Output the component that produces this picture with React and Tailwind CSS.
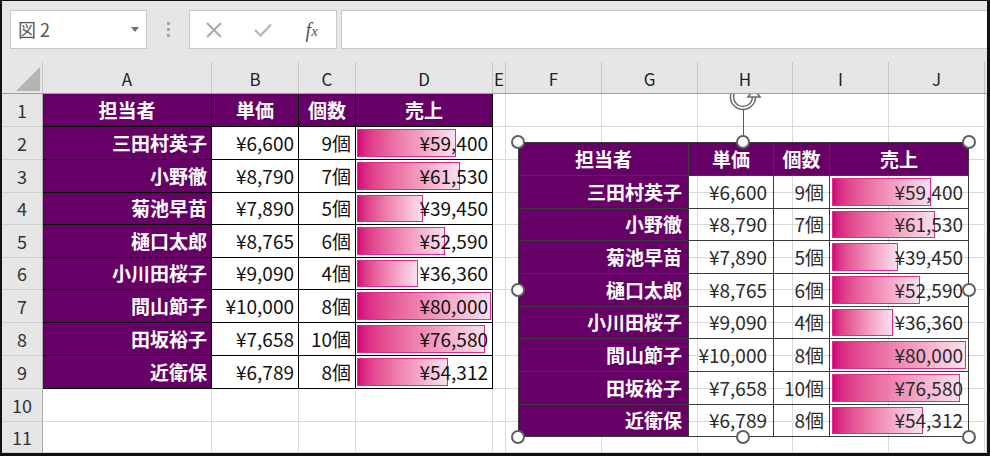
import React from 'react';

const people = [
  ['三田村英子', '¥6,600', '9個', 59400, '¥59,400'],
  ['小野徹', '¥8,790', '7個', 61530, '¥61,530'],
  ['菊池早苗', '¥7,890', '5個', 39450, '¥39,450'],
  ['樋口太郎', '¥8,765', '6個', 52590, '¥52,590'],
  ['小川田桜子', '¥9,090', '4個', 36360, '¥36,360'],
  ['間山節子', '¥10,000', '8個', 80000, '¥80,000'],
  ['田坂裕子', '¥7,658', '10個', 76580, '¥76,580'],
  ['近衛保', '¥6,789', '8個', 54312, '¥54,312'],
];

const heads = ['担当者', '単価', '個数', '売上'];
const letters = ['A', 'B', 'C', 'D', 'E', 'F', 'G', 'H', 'I', 'J'];
const MAX = 80000;

const COLS = 'grid grid-cols-[41px_169px_87px_57px_137px_13px_96px_96px_95px_96px_96px_1fr]';

function FormulaBar() {
  return (
    <div className="flex h-[61px] shrink-0 items-start pl-[8px] pt-[9px]">
      {/* 名前ボックス */}
      <div className="flex h-[39px] w-[137px] items-center justify-between border border-[#c8c8c8] bg-white pl-[7px] pr-[7px]">
        <span className="text-[18px] text-[#555]">図 2</span>
        <svg width="8" height="5" viewBox="0 0 8 5">
          <path d="M0 0 L8 0 L4 5 Z" fill="#707070" />
        </svg>
      </div>
      <div className="flex h-[39px] w-[42px] flex-col items-center justify-center gap-[3px]">
        <span className="h-[3px] w-[3px] bg-[#a6a6a6]" />
        <span className="h-[3px] w-[3px] bg-[#a6a6a6]" />
        <span className="h-[3px] w-[3px] bg-[#a6a6a6]" />
      </div>
      <div className="flex h-[39px] w-[148px] items-center border border-[#c8c8c8] bg-white">
        <div className="flex w-[49px] justify-center">
          <svg width="18" height="18" viewBox="0 0 18 18">
            <path d="M2 2 L16 16 M16 2 L2 16" stroke="#a9a9a9" strokeWidth="2" />
          </svg>
        </div>
        <div className="flex w-[49px] justify-center">
          <svg width="20" height="16" viewBox="0 0 20 16">
            <path d="M2 8 L7.5 13.5 L18 2.5" stroke="#b9b9b9" strokeWidth="2.4" fill="none" />
          </svg>
        </div>
        <div className="flex w-[49px] justify-center font-['Liberation_Serif',serif] text-[20px] italic text-[#555]">
          <span>f</span>
          <span className="mt-[5px] text-[15px]">x</span>
        </div>
      </div>
      <div className="ml-[4px] h-[39px] flex-1 border-y border-l border-[#c8c8c8] bg-white" />
    </div>
  );
}

function ColumnHeaders() {
  return (
    <div className={`${COLS} h-[32px] shrink-0 border-b border-[#9e9e9e]`}>
      <div className="relative border-r border-[#c6c6c6]">
        <svg className="absolute left-[14px] top-[5px]" width="24" height="24" viewBox="0 0 24 24">
          <path d="M24 0 L24 24 L0 24 Z" fill="#b5b5b5" />
        </svg>
      </div>
      {letters.map((l) => (
        <div key={l} className="flex items-center justify-center border-r border-[#c6c6c6] pt-[3px] text-[17px] text-[#222]">
          {l}
        </div>
      ))}
      <div />
    </div>
  );
}

function Bar({ value, left }) {
  return (
    <div
      className={`absolute bottom-[2px] top-[2px] ${left} border border-[#dc2d8e] bg-gradient-to-r from-[#d6007b] to-[#fae0ee]`}
      style={{ width: `${(value / MAX) * 134}px` }}
    />
  );
}

function cellFor(r, c) {
  const grid = 'border-r border-b border-[#d9d9d9] bg-white';
  if (r === 0 && c >= 1 && c <= 4) {
    return (
      <div key={c} className="flex items-center justify-center border-b border-r border-black bg-[#660066] text-[19px] font-bold text-white">
        {heads[c - 1]}
      </div>
    );
  }
  if (r >= 1 && r <= 8 && c >= 1 && c <= 4) {
    const p = people[r - 1];
    if (c === 1) {
      return (
        <div key={c} className="flex items-center justify-end border-b border-r border-black bg-[#660066] pr-[4px] text-[19px] font-bold text-white">
          {p[0]}
        </div>
      );
    }
    if (c === 4) {
      return (
        <div key={c} className="relative flex items-center justify-end border-b border-r border-black bg-white pr-[4px] text-[19px] text-[#111]">
          <Bar value={p[3]} left="left-[1px]" />
          <span className="relative">{p[4]}</span>
        </div>
      );
    }
    return (
      <div key={c} className="flex items-center justify-end border-b border-r border-black bg-white pr-[4px] text-[19px] text-[#111]">
        {p[c - 1]}
      </div>
    );
  }
  return <div key={c} className={grid} />;
}

function PictureCopy() {
  return (
    <>
      {/* 図 2: 貼り付けたテーブルの画像（白いセルは透過） */}
      <div className="absolute left-[516px] top-[48px] grid h-[295px] w-[451px] grid-cols-[170px_85px_56px_139px] grid-rows-[33px_33px_32px_33px_33px_32px_33px_33px_32px] border-l border-t border-[#3a3a3a] text-[19px]">
        {heads.map((h) => (
          <div key={h} className="flex items-center justify-center border-b border-r border-[#3a3a3a] bg-[#660066] font-bold text-white">
            {h}
          </div>
        ))}
        {people.map((p) => (
          <React.Fragment key={p[0]}>
            <div className="flex items-center justify-end border-b border-r border-[#3a3a3a] bg-[#660066] pr-[6px] font-bold text-white">
              {p[0]}
            </div>
            <div className="flex items-center justify-end border-b border-r border-[#3a3a3a] pr-[6px] text-[#2a2a2a]">{p[1]}</div>
            <div className="flex items-center justify-end border-b border-r border-[#3a3a3a] pr-[5px] text-[#2a2a2a]">{p[2]}</div>
            <div className="relative flex items-center justify-end border-b border-r border-[#3a3a3a] pr-[5px] text-[#2a2a2a]">
              <Bar value={p[3]} left="left-[2px]" />
              <span className="relative">{p[4]}</span>
            </div>
          </React.Fragment>
        ))}
      </div>

      {/* 回転ハンドル */}
      <svg className="absolute left-[721px] top-[-17px]" width="44" height="40" viewBox="0 0 44 40">
        <path d="M20 9 A11 11 0 1 0 31 20" stroke="#6a6a6a" strokeWidth="4.5" fill="none" />
        <path d="M20 9 A11 11 0 1 0 31 20" stroke="#fff" strokeWidth="1.6" fill="none" />
        <path d="M25 20 L37 20 L31 12 Z" fill="#fff" stroke="#6a6a6a" strokeWidth="1.6" />
      </svg>
      <div className="absolute left-[741px] top-[15px] h-[27px] w-px bg-[#5a5a5a]" />

      {/* サイズ変更ハンドル */}
      {[
        'left-[509px] top-[41px]',
        'left-[734px] top-[41px]',
        'left-[960px] top-[41px]',
        'left-[509px] top-[189px]',
        'left-[960px] top-[189px]',
        'left-[509px] top-[336px]',
        'left-[734px] top-[336px]',
        'left-[960px] top-[336px]',
      ].map((pos) => (
        <span key={pos} className={`absolute ${pos} h-[14px] w-[14px] rounded-full border-2 border-[#5f5f5f] bg-white`} />
      ))}
    </>
  );
}

export default function App() {
  return (
    <div className="flex h-[456px] w-[990px] flex-col overflow-hidden border-b-[3px] border-l-2 border-r-[3px] border-t border-[#111] bg-[#e6e6e6] font-['Noto_Sans_CJK_JP','Noto_Sans',sans-serif]">
      <FormulaBar />
      <ColumnHeaders />
      <div className={`${COLS} relative flex-1 grid-rows-[33px_33px_33px_32px_33px_32px_33px_33px_33px_33px_31px] overflow-hidden`}>
        {Array.from({ length: 11 }).map((_, r) => (
          <React.Fragment key={r}>
            <div className="flex items-center justify-center border-b border-r border-b-[#cfcfcf] border-r-[#ababab] bg-[#e6e6e6] text-[18px] text-[#333]">
              {r + 1}
            </div>
            {Array.from({ length: 11 }).map((__, i) => cellFor(r, i + 1))}
          </React.Fragment>
        ))}
        <PictureCopy />
      </div>
    </div>
  );
}
